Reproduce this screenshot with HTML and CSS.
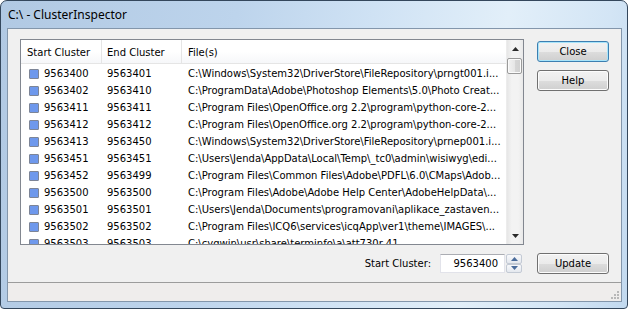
FILE: index.html
```html
<!DOCTYPE html>
<html lang="en">
<head>
    <meta charset="UTF-8">
    <title>C:\ - ClusterInspector</title>
    <link rel="stylesheet" href="styles.css">
</head>
<body>
    <div class="window">
        <div class="titlebar">C:\ - ClusterInspector</div>

        <div class="client">
            <div class="main">
                <div class="listview">
                    <div class="list-body">
                        <div class="list-header">
                            <div class="hcell col-start">Start Cluster</div>
                            <div class="hcell col-end">End Cluster</div>
                            <div class="hcell col-file">File(s)</div>
                        </div>
                        <div class="rows">
                            <div class="row"><div class="cell col-start"><span class="chip"></span>9563400</div><div class="cell col-end">9563401</div><div class="cell col-file">C:\Windows\System32\DriverStore\FileRepository\prngt001.i...</div></div>
                            <div class="row"><div class="cell col-start"><span class="chip"></span>9563402</div><div class="cell col-end">9563410</div><div class="cell col-file">C:\ProgramData\Adobe\Photoshop Elements\5.0\Photo Creat...</div></div>
                            <div class="row"><div class="cell col-start"><span class="chip"></span>9563411</div><div class="cell col-end">9563411</div><div class="cell col-file">C:\Program Files\OpenOffice.org 2.2\program\python-core-2...</div></div>
                            <div class="row"><div class="cell col-start"><span class="chip"></span>9563412</div><div class="cell col-end">9563412</div><div class="cell col-file">C:\Program Files\OpenOffice.org 2.2\program\python-core-2...</div></div>
                            <div class="row"><div class="cell col-start"><span class="chip"></span>9563413</div><div class="cell col-end">9563450</div><div class="cell col-file">C:\Windows\System32\DriverStore\FileRepository\prnep001.i...</div></div>
                            <div class="row"><div class="cell col-start"><span class="chip"></span>9563451</div><div class="cell col-end">9563451</div><div class="cell col-file">C:\Users\Jenda\AppData\Local\Temp\_tc0\admin\wisiwyg\edi...</div></div>
                            <div class="row"><div class="cell col-start"><span class="chip"></span>9563452</div><div class="cell col-end">9563499</div><div class="cell col-file">C:\Program Files\Common Files\Adobe\PDFL\6.0\CMaps\Adob...</div></div>
                            <div class="row"><div class="cell col-start"><span class="chip"></span>9563500</div><div class="cell col-end">9563500</div><div class="cell col-file">C:\Program Files\Adobe\Adobe Help Center\AdobeHelpData\...</div></div>
                            <div class="row"><div class="cell col-start"><span class="chip"></span>9563501</div><div class="cell col-end">9563501</div><div class="cell col-file">C:\Users\Jenda\Documents\programovani\aplikace_zastaven...</div></div>
                            <div class="row"><div class="cell col-start"><span class="chip"></span>9563502</div><div class="cell col-end">9563502</div><div class="cell col-file">C:\Program Files\ICQ6\services\icqApp\ver1\theme\IMAGES\...</div></div>
                            <div class="row"><div class="cell col-start"><span class="chip"></span>9563503</div><div class="cell col-end">9563503</div><div class="cell col-file">C:\cygwin\usr\share\terminfo\a\att730r-41</div></div>
                        </div>
                    </div>

                    <div class="scrollbar">
                        <div class="sb-button">
                            <svg width="7" height="4" viewBox="0 0 7 4"><path d="M3.5 0 L7 4 L0 4 Z" fill="#2b2b2b"/></svg>
                        </div>
                        <div class="sb-track">
                            <div class="sb-thumb"></div>
                        </div>
                        <div class="sb-button">
                            <svg width="7" height="4" viewBox="0 0 7 4"><path d="M0 0 L7 0 L3.5 4 Z" fill="#2b2b2b"/></svg>
                        </div>
                    </div>
                </div>

                <div class="side-buttons">
                    <button class="btn btn-default">Close</button>
                    <button class="btn">Help</button>
                </div>
            </div>

            <div class="bottom-row">
                <span class="label">Start Cluster:</span>
                <div class="spin-field">
                    <div class="textbox">9563400</div>
                    <div class="spin">
                        <div class="spin-half">
                            <svg width="7" height="4" viewBox="0 0 7 4"><path d="M3.5 0 L7 4 L0 4 Z" fill="#4a6c9b"/></svg>
                        </div>
                        <div class="spin-half">
                            <svg width="7" height="4" viewBox="0 0 7 4"><path d="M0 0 L7 0 L3.5 4 Z" fill="#4a6c9b"/></svg>
                        </div>
                    </div>
                </div>
                <button class="btn">Update</button>
            </div>

            <div class="statusbar">
                <svg class="grip" width="10" height="10" viewBox="0 0 10 10">
                    <rect x="7" y="1" width="2" height="2" fill="#b8b8b8"/>
                    <rect x="4" y="4" width="2" height="2" fill="#b8b8b8"/>
                    <rect x="7" y="4" width="2" height="2" fill="#b8b8b8"/>
                    <rect x="1" y="7" width="2" height="2" fill="#b8b8b8"/>
                    <rect x="4" y="7" width="2" height="2" fill="#b8b8b8"/>
                    <rect x="7" y="7" width="2" height="2" fill="#b8b8b8"/>
                </svg>
            </div>
        </div>
    </div>
</body>
</html>
```

FILE: styles.css
```css
/* page */
body {
    margin: 0;
    background-color: #ffffff;
    font-family: "DejaVu Sans", "Liberation Sans", sans-serif;
    font-size: 10px;
    color: #000000;
}

/* window frame */
.window {
    width: 628px;
    height: 309px;
    box-sizing: border-box;
    border: 1px solid #34475c;
    border-radius: 7px 7px 4px 4px;
    background: linear-gradient(100deg, #b1c9e3 0%, #bdd4ec 35%, #cfe2f4 55%, #e2eff9 75%, #d3e5f5 90%, #c2d9ef 100%);
    display: flex;
    flex-direction: column;
    overflow: hidden;
}

.titlebar {
    height: 27px;
    padding-left: 7px;
    display: flex;
    align-items: center;
    font-family: "Noto Sans", "Open Sans", sans-serif;
    font-size: 12px;
    color: #000000;
}

/* client area */
.client {
    flex: 1;
    margin: 0 5px 6px 6px;
    border: 1px solid #8396ab;
    background-color: #f0f0f0;
    display: flex;
    flex-direction: column;
}

.main {
    display: flex;
    gap: 13px;
    padding: 10px 12px 0 12px;
}

/* list view */
.listview {
    width: 504px;
    height: 206px;
    box-sizing: border-box;
    border: 1px solid #828790;
    background-color: #ffffff;
    display: flex;
    overflow: hidden;
}

.list-body {
    flex: 1;
    min-width: 0;
    display: flex;
    flex-direction: column;
    overflow: hidden;
}

.list-header {
    flex-shrink: 0;
    height: 24px;
    box-sizing: border-box;
    display: flex;
    border-bottom: 1px solid #e5e5e5;
    background: linear-gradient(#ffffff 0%, #ffffff 50%, #f6f7f9 100%);
}

.hcell {
    display: flex;
    align-items: center;
    padding-top: 1px;
    box-sizing: border-box;
    white-space: nowrap;
}

.list-header .col-start,
.list-header .col-end {
    border-right: 1px solid #e5e5e5;
}

.col-start {
    width: 81px;
    padding-left: 6px;
}

.col-end {
    width: 80px;
    padding-left: 5px;
}

.col-file {
    flex: 1;
    min-width: 0;
    padding-left: 6px;
}

.rows {
    flex-shrink: 0;
    padding-top: 1px;
}

.row {
    height: 17px;
    display: flex;
}

.cell {
    display: flex;
    align-items: center;
    box-sizing: border-box;
    white-space: nowrap;
    overflow: hidden;
}

.row .col-start {
    padding-left: 8px;
}

.chip {
    width: 10px;
    height: 10px;
    box-sizing: border-box;
    margin-right: 5px;
    border: 1px solid #7d8597;
    border-radius: 1px;
    background-color: #6e98ec;
}

/* scrollbar */
.scrollbar {
    width: 17px;
    flex-shrink: 0;
    display: flex;
    flex-direction: column;
    background: linear-gradient(90deg, #e6e6e6, #f3f3f3 30%, #f3f3f3 70%, #e9e9e9);
    border-left: 1px solid #ececec;
    box-sizing: border-box;
}

.sb-button {
    height: 17px;
    display: flex;
    align-items: center;
    justify-content: center;
}

.sb-track {
    flex: 1;
    padding: 1px 1px 0 0;
}

.sb-thumb {
    height: 16px;
    box-sizing: border-box;
    border: 1px solid #9a9a9a;
    border-radius: 2px;
    background: linear-gradient(90deg, #f2f2f2, #e6e6e6 50%, #d6d6d6 51%, #d0d0d0);
    box-shadow: inset 0 0 0 1px #fbfbfb;
}

/* buttons */
.side-buttons {
    display: flex;
    flex-direction: column;
    gap: 8px;
    padding-top: 2px;
}

.btn {
    width: 72px;
    height: 21px;
    padding: 0;
    border: 1px solid #707070;
    border-radius: 3px;
    background: linear-gradient(#f2f2f2 0%, #ebebeb 50%, #dddddd 51%, #cfcfcf 100%);
    box-shadow: inset 0 0 0 1px #fcfcfc;
    font-family: "DejaVu Sans", "Liberation Sans", sans-serif;
    font-size: 10px;
    color: #000000;
}

.btn-default {
    border-color: #3c7fb1;
    box-shadow: inset 0 0 0 1px #a8e4fa;
}

/* bottom row */
.bottom-row {
    height: 21px;
    margin-top: 8px;
    padding-right: 12px;
    display: flex;
    align-items: center;
    justify-content: flex-end;
}

.label {
    margin-right: 9px;
}

.spin-field {
    display: flex;
    gap: 1px;
    margin-right: 15px;
}

.textbox {
    width: 65px;
    height: 19px;
    box-sizing: border-box;
    border: 1px solid #e2e3ea;
    border-top-color: #abadb3;
    background-color: #ffffff;
    display: flex;
    align-items: center;
    justify-content: flex-end;
    padding-right: 6px;
}

.spin {
    width: 16px;
    height: 19px;
    display: flex;
    flex-direction: column;
}

.spin-half {
    flex: 1;
    display: flex;
    align-items: center;
    justify-content: center;
    border: 1px solid #c3cad4;
    border-radius: 2px;
    background: linear-gradient(#f8f9fb, #e4e8ee);
}

/* status bar */
.statusbar {
    flex: 1;
    margin-top: 8px;
    border-top: 1px solid #9c9c9c;
    background-color: #efedec;
    display: flex;
    justify-content: flex-end;
    align-items: flex-end;
}

.grip {
    margin: 0 1px 1px 0;
}
```
